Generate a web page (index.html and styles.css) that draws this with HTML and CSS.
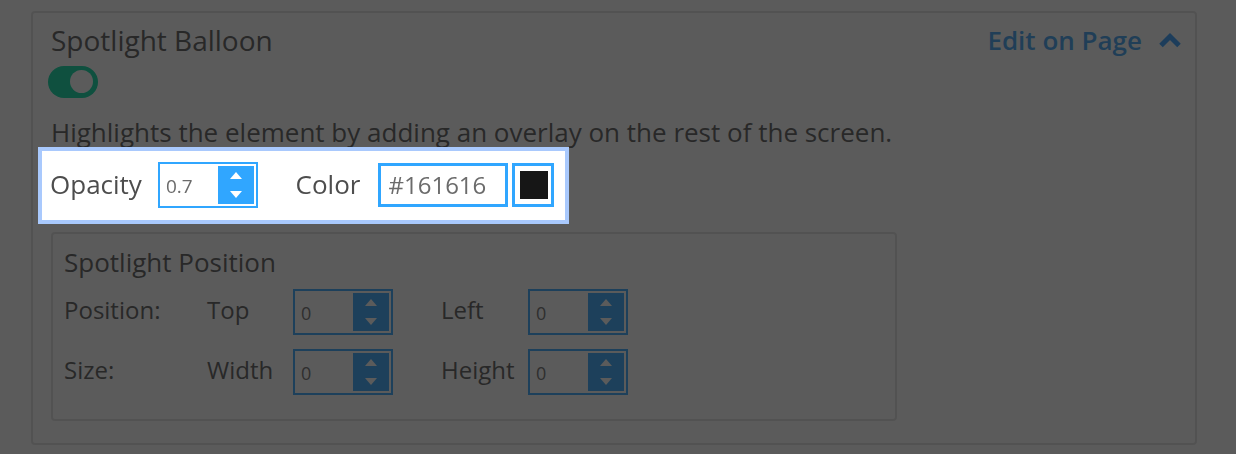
FILE: index.html
```html
<!DOCTYPE html>
<html lang="en">
<head>
<meta charset="utf-8">
<title>Spotlight Balloon</title>
<link rel="stylesheet" href="styles.css">
</head>
<body>
<div class="card">
  <div class="card-head">
    <h2 class="card-title">Spotlight Balloon</h2>
    <a class="edit-link" href="#">Edit on Page
      <svg class="chevron" width="24" height="16" viewBox="0 0 24 16"><polyline points="3,13.5 12,4.5 21,13.5" fill="none" stroke="currentColor" stroke-width="5" stroke-linejoin="miter"/></svg>
    </a>
  </div>
  <span class="toggle"><span class="knob"></span></span>
  <p class="desc">Highlights the element by adding an overlay on the rest of the screen.</p>
  <div class="spot-row">
    <span class="lbl">Opacity</span>
    <div class="num"><span class="num-val num-val-lg">0.7</span><span class="spin"><svg width="36" height="38" viewBox="0 0 36 38"><polygon points="12,13 24,13 18,6" fill="#fff"/><polygon points="12,25 24,25 18,32" fill="#fff"/></svg></span></div>
    <span class="lbl lbl-color">Color</span>
    <div class="hex">#161616</div>
    <div class="swatch"><span class="swatch-fill"></span></div>
  </div>
  <div class="pos-box">
    <div class="pos-title">Spotlight Position</div>
    <div class="pos-grid">
      <span class="pos-lbl">Position:</span>
      <span class="pos-lbl">Top</span>
      <div class="num"><span class="num-val">0</span><span class="spin"><svg width="36" height="38" viewBox="0 0 36 38"><polygon points="12,13 24,13 18,6" fill="#fff"/><polygon points="12,25 24,25 18,32" fill="#fff"/></svg></span></div>
      <span class="pos-lbl">Left</span>
      <div class="num"><span class="num-val">0</span><span class="spin"><svg width="36" height="38" viewBox="0 0 36 38"><polygon points="12,13 24,13 18,6" fill="#fff"/><polygon points="12,25 24,25 18,32" fill="#fff"/></svg></span></div>
      <span class="pos-lbl">Size:</span>
      <span class="pos-lbl">Width</span>
      <div class="num"><span class="num-val">0</span><span class="spin"><svg width="36" height="38" viewBox="0 0 36 38"><polygon points="12,13 24,13 18,6" fill="#fff"/><polygon points="12,25 24,25 18,32" fill="#fff"/></svg></span></div>
      <span class="pos-lbl">Height</span>
      <div class="num"><span class="num-val">0</span><span class="spin"><svg width="36" height="38" viewBox="0 0 36 38"><polygon points="12,13 24,13 18,6" fill="#fff"/><polygon points="12,25 24,25 18,32" fill="#fff"/></svg></span></div>
    </div>
  </div>
</div>
<div class="overlay"></div>
</body>
</html>
```

FILE: styles.css
```css
* { box-sizing: border-box; }
html, body { margin: 0; padding: 0; background: #fff; }
body {
  font-family: "Open Sans", "Liberation Sans", sans-serif;
  color: #555;
  width: 1236px;
  height: 454px;
  overflow: hidden;
}
.card {
  margin: 11px 39px 0 31px;
  border: 2px solid #e2e2e2;
  border-radius: 4px;
  padding: 8px 13px 22px 18px;
  display: flex;
  flex-direction: column;
  align-items: flex-start;
  height: 434px;
}
.card-head {
  align-self: stretch;
  display: flex;
  justify-content: space-between;
  align-items: center;
}
.card-title {
  margin: 0;
  font-size: 28px;
  line-height: 38px;
  font-weight: 400;
  color: #555;
}
.edit-link {
  display: flex;
  align-items: center;
  gap: 16px;
  font-size: 26px;
  font-weight: 600;
  line-height: 38px;
  color: #3a9ff0;
  text-decoration: none;
}
.chevron { color: #2f9bff; }
.toggle {
  margin: 7px 0 0 -3px;
  width: 50px;
  height: 32px;
  border-radius: 16px;
  background: #00d9a0;
  display: flex;
  align-items: center;
  justify-content: flex-end;
  padding-right: 5px;
}
.knob {
  width: 23px;
  height: 23px;
  border-radius: 50%;
  background: #fff;
}
.desc {
  margin: 17px 0 0;
  font-size: 26px;
  line-height: 34px;
  color: #555;
}
.spot-row {
  position: relative;
  z-index: 10;
  margin: 2px 0 0 -9px;
  height: 69px;
  width: 523px;
  padding: 0 11px 0 8px;
  background: #fff;
  box-shadow: 0 0 0 4px #a9c9fd;
  display: flex;
  align-items: center;
}
.lbl {
  font-size: 26px;
  line-height: 34px;
  color: #4d4d4d;
  margin-right: 16px;
  margin-top: -2px;
}
.lbl-color { margin-left: 38px; margin-right: 18px; }
.num {
  width: 100px;
  height: 46px;
  border: 2px solid #30a6ff;
  padding: 2px;
  display: flex;
  align-items: stretch;
  background: #fff;
}
.num-val {
  flex: 1;
  font-size: 18px;
  line-height: 38px;
  padding: 1px 0 0 4px;
  color: #6b6b6b;
}
.num-val-lg { font-size: 19px; }
.spin {
  width: 36px;
  background: #30a6ff;
  display: flex;
}
.hex {
  width: 130px;
  height: 44px;
  border: 3px solid #30a6ff;
  font-size: 24px;
  line-height: 38px;
  padding-left: 7px;
  color: #6b6b6b;
}
.swatch {
  margin-left: 4px;
  width: 42px;
  height: 44px;
  border: 3px solid #30a6ff;
  padding: 5px 3px 5px 5px;
  display: flex;
}
.swatch-fill { flex: 1; background: #161616; }
.pos-box {
  margin-top: 12px;
  width: 846px;
  height: 190px;
  border: 2px solid #e2e2e2;
  border-radius: 4px;
  padding: 7px 12px 0 11px;
}
.pos-title {
  font-size: 26px;
  line-height: 42px;
  color: #555;
}
.pos-grid {
  margin-top: 6px;
  display: grid;
  grid-template-columns: 143px 86px 148px 87px 100px;
  grid-auto-rows: 46px;
  row-gap: 14px;
  align-items: center;
}
.pos-lbl {
  font-size: 24px;
  line-height: 32px;
  margin-top: -4px;
  color: #555;
}
.overlay {
  position: fixed;
  inset: 0;
  z-index: 5;
  background: rgba(22, 22, 22, 0.7);
}
```
